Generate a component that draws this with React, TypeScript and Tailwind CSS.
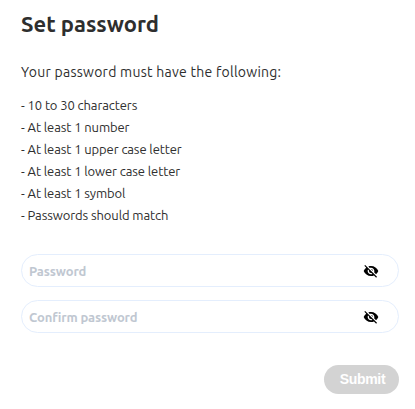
import { MdVisibilityOff } from 'react-icons/md'

const RULES = [
  '- 10 to 30 characters',
  '- At least 1 number',
  '- At least 1 upper case letter',
  '- At least 1 lower case letter',
  '- At least 1 symbol',
  '- Passwords should match',
]

const FIELDS = [
  { id: 'password', label: 'Password' },
  { id: 'confirm', label: 'Confirm password' },
]

export default function App() {
  return (
    <main className="h-[409px] w-[415px] overflow-hidden bg-white pl-[21px] pr-4 pt-2 font-['Ubuntu','Noto_Sans',sans-serif] text-[#2e2e2e]">
      <h1 className="h-8 whitespace-nowrap text-[22px] font-bold leading-8">
        Set password
      </h1>
      <p className="mt-[22px] whitespace-nowrap text-sm leading-5 tracking-[0.26px]">
        Your password must have the following:
      </p>

      <ul className="mt-3 text-[13px] leading-[22px] tracking-[-0.1px]">
        {RULES.map((rule) => (
          <li key={rule} className="whitespace-nowrap">
            {rule}
          </li>
        ))}
      </ul>

      <form onSubmit={(e) => e.preventDefault()}>
        <div className="mt-7 space-y-[13px]">
          {FIELDS.map((field) => (
            <div
              key={field.id}
              className="flex h-[33px] items-center rounded-full border border-[#e4eefd] pl-[7px] pr-[19px]"
            >
              <input
                id={field.id}
                type="password"
                placeholder={field.label}
                aria-label={field.label}
                className="min-w-0 flex-1 bg-transparent pt-0.5 text-[13px] font-bold tracking-[-0.13px] outline-none placeholder:text-[#c0c7d1]"
              />
              <button type="button" aria-label="Show password" className="text-black">
                <MdVisibilityOff size={16} />
              </button>
            </div>
          ))}
        </div>

        <div className="mt-8 flex justify-end">
          <button
            type="submit"
            className="h-[29px] w-[75px] rounded-full bg-[#d3d3d3] pl-0.5 font-['Liberation_Sans',sans-serif] text-sm font-bold leading-[29px] tracking-[-0.3px] text-white"
          >
            Submit
          </button>
        </div>
      </form>
    </main>
  )
}
